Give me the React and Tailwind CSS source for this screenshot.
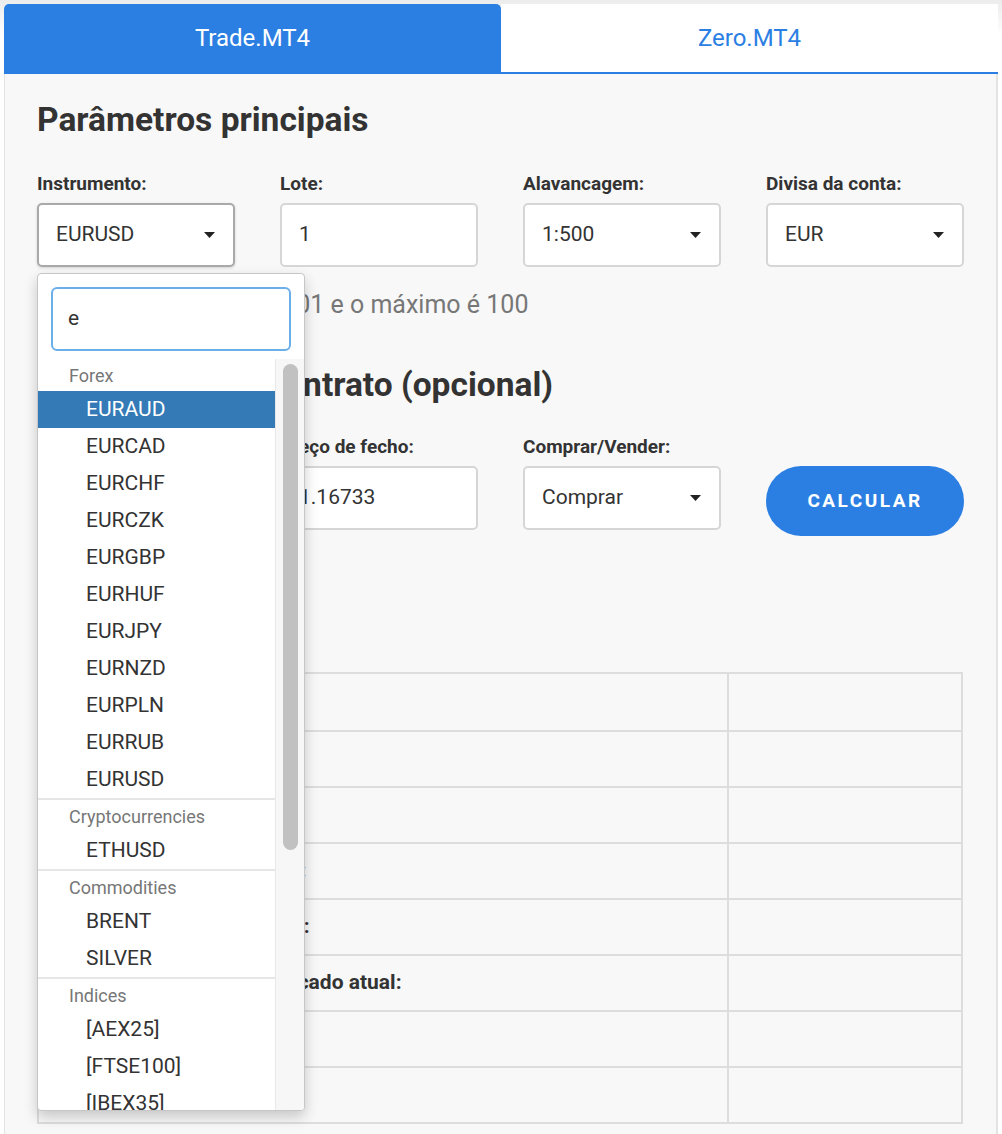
import React from "react";

const groups = [
  {
    label: "Forex",
    items: ["EURAUD", "EURCAD", "EURCHF", "EURCZK", "EURGBP", "EURHUF", "EURJPY", "EURNZD", "EURPLN", "EURRUB", "EURUSD"],
  },
  { label: "Cryptocurrencies", items: ["ETHUSD"] },
  { label: "Commodities", items: ["BRENT", "SILVER"] },
  { label: "Indices", items: ["[AEX25]", "[FTSE100]", "[IBEX35]"] },
];

const resultRows = [
  "Valor do pip:",
  "Margem:",
  "Spread:",
  "Swap de posição curta:",
  "Swap de posição longa:",
  "Lucro ao preço de mercado atual:",
  "Lucro/Perda:",
  "Valor do contrato:",
];

const Caret = () => (
  <svg width="11" height="6" viewBox="0 0 11 6">
    <path d="M0 0h11L5.5 6z" fill="#222" />
  </svg>
);

const Field = ({ label, children }) => (
  <div>
    <label className="mb-2 block text-[19px] font-bold leading-[22px] text-[#333]">{label}</label>
    {children}
  </div>
);

const SelectBox = ({ value, active }) => (
  <div
    className={`flex h-[64px] items-center justify-between rounded-[5px] border-2 bg-white pl-[17px] pr-[18px] text-[21px] text-[#333] ${
      active ? "border-[#a9a9a9] shadow-[0_1px_3px_rgba(0,0,0,0.15)]" : "border-[#d6d6d6]"
    }`}
  >
    <span>{value}</span>
    <Caret />
  </div>
);

const TextBox = ({ value }) => (
  <div className="flex h-[64px] items-center rounded-[5px] border-2 border-[#d6d6d6] bg-white pl-[17px] text-[21px] text-[#333]">
    {value}
  </div>
);

const InstrumentDropdown = () => (
  <div className="absolute left-0 top-[70px] z-10 flex h-[838px] w-[268px] flex-col overflow-hidden rounded-[4px] border border-[#c6c6c6] bg-white shadow-[0_6px_14px_rgba(0,0,0,0.2)]">
    <div className="px-[13px] pt-[13px]">
      <div className="flex h-[64px] items-center rounded-[6px] border-2 border-[#6aafea] pl-[15px] text-[21px] text-[#333]">e</div>
    </div>
    <div className="mt-[8px] flex min-h-0 flex-1">
      <div className="flex-1 overflow-hidden">
        {groups.map((g, gi) => (
          <div key={g.label} className={gi > 0 ? "border-t-2 border-[#e6e6e6]" : ""}>
            <div className="flex h-[32px] items-center pl-[31px] text-[18px] text-[#777]">{g.label}</div>
            {g.items.map((item) => (
              <div
                key={item}
                className={`flex h-[37px] items-center pl-[48px] text-[21px] ${
                  item === "EURAUD" ? "bg-[#337ab7] text-white" : "text-[#333]"
                }`}
              >
                {item}
              </div>
            ))}
          </div>
        ))}
      </div>
      <div className="w-[29px] border-l border-[#e8e8e8] bg-[#f7f7f7] pl-[7px] pt-[5px]">
        <div className="h-[486px] w-[15px] rounded-full bg-[#c1c1c1]" />
      </div>
    </div>
  </div>
);

export default function App() {
  return (
    <div className="min-h-screen bg-white font-[Roboto,sans-serif] text-[#333]">
      <div className="bg-[linear-gradient(to_bottom,#ececec,#ffffff_36px)] px-1 pt-1">
        <div className="flex border-b-2 border-[#2b7fe3]">
          <button className="flex h-[68px] flex-1 items-center justify-center rounded-t-[5px] bg-[#2b7fe3] text-[24px] text-white">
            Trade.MT4
          </button>
          <button className="flex h-[68px] flex-1 items-center justify-center bg-white text-[24px] text-[#2b7fe3]">
            Zero.MT4
          </button>
        </div>
      </div>

      <div className="mx-1 border-l border-r-2 border-[#e3e3e3] bg-[#f8f8f8] px-8 pb-12 pt-[27px]">
        <h2 className="text-[33.5px] font-bold leading-[38px] text-[#333]">Parâmetros principais</h2>

        <div className="mt-[34px] grid grid-cols-4 gap-x-[45px]">
          <Field label="Instrumento:">
            <div className="relative">
              <SelectBox value="EURUSD" active />
              <InstrumentDropdown />
            </div>
          </Field>
          <Field label="Lote:">
            <TextBox value="1" />
          </Field>
          <Field label="Alavancagem:">
            <SelectBox value="1:500" />
          </Field>
          <Field label="Divisa da conta:">
            <SelectBox value="EUR" />
          </Field>
        </div>

        <p className="mt-[24px] text-[25px] leading-[28px] text-[#777]">O tamanho mínimo é 0.01 e o máximo é 100</p>

        <h2 className="mt-[47px] text-[33.5px] font-bold leading-[38px] text-[#333]">Parâmetros do contrato (opcional)</h2>

        <div className="mt-[32px] grid grid-cols-4 items-start gap-x-[45px]">
          <Field label="Preço de abertura:">
            <TextBox value="1.16520" />
          </Field>
          <Field label="Preço de fecho:">
            <TextBox value="1.16733" />
          </Field>
          <Field label="Comprar/Vender:">
            <SelectBox value="Comprar" />
          </Field>
          <div className="pt-[30px]">
            <button className="flex h-[70px] w-full items-center justify-center rounded-full bg-[#2b7fe3] text-[19px] font-bold tracking-[2.5px] text-white">
              CALCULAR
            </button>
          </div>
        </div>

        <div className="mt-[136px] w-[926px] border-2 border-[#dddddd]">
          {resultRows.map((label, i) => (
            <div key={label} className={`flex h-[56px] ${i > 0 ? "border-t-2 border-[#dddddd]" : ""}`}>
              <div className="flex w-[688px] items-center pl-[48px] text-[21px] font-bold text-[#333]">{label}</div>
              <div className="flex-1 border-l-2 border-[#dddddd]" />
            </div>
          ))}
        </div>
      </div>
    </div>
  );
}
